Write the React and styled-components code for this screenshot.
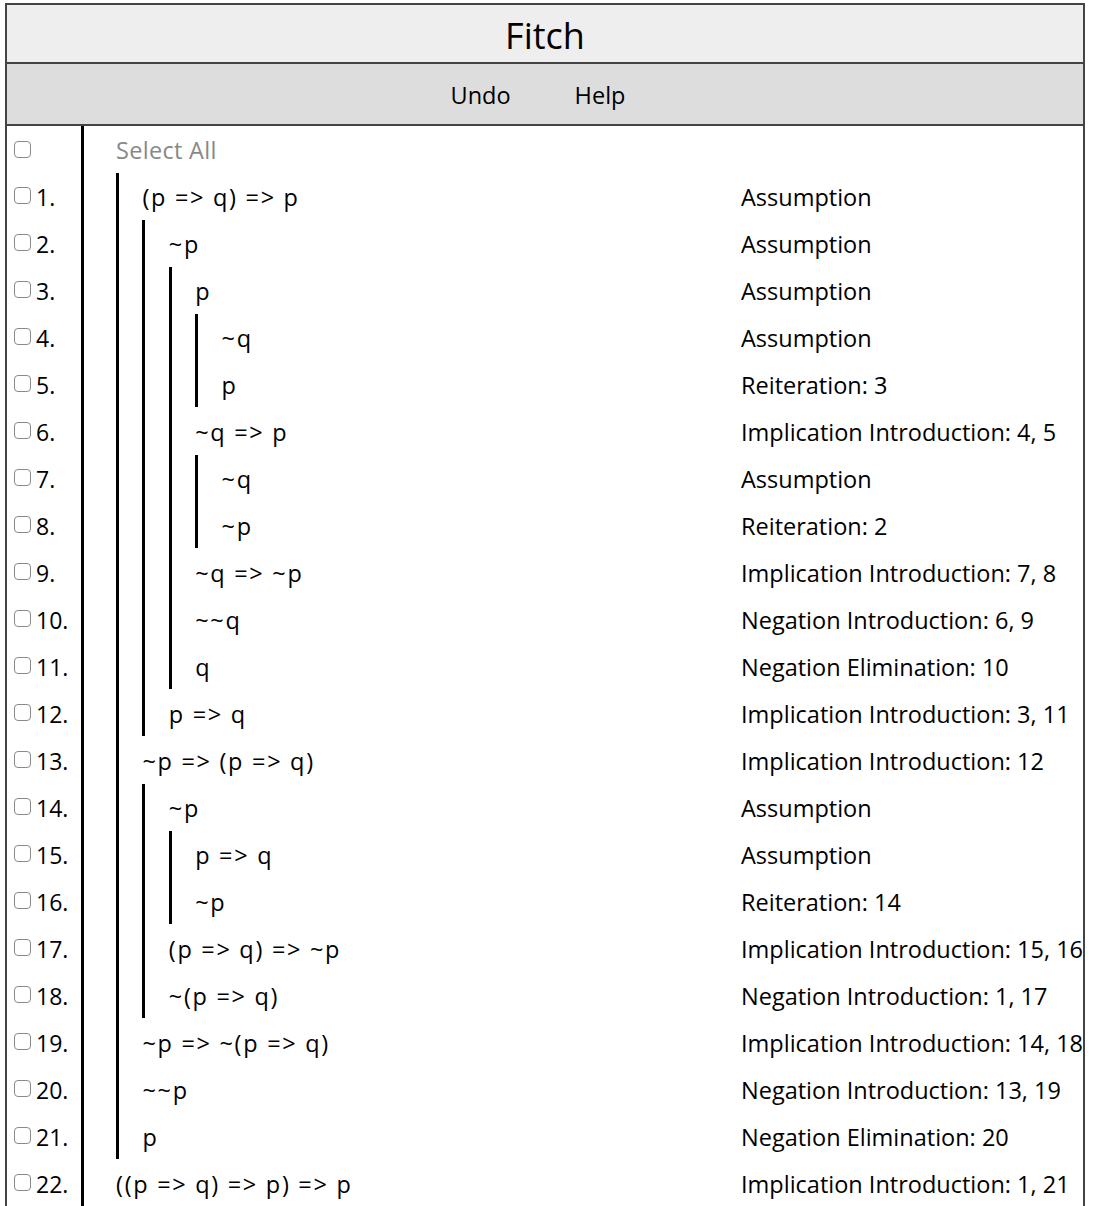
import React from "react";
import styled, { createGlobalStyle } from "styled-components";

const GlobalStyle = createGlobalStyle`
  html, body {
    margin: 0;
    padding: 0;
    background: #fff;
  }
  body {
    font-family: "Open Sans", "Noto Sans CJK KR", sans-serif;
    color: #000;
  }
`;

// depth = number of scope bars, start = opens a new subproof at its innermost level
const lines = [
  { f: "(p => q) => p", j: "Assumption", depth: 1, start: true },
  { f: "~p", j: "Assumption", depth: 2, start: true },
  { f: "p", j: "Assumption", depth: 3, start: true },
  { f: "~q", j: "Assumption", depth: 4, start: true },
  { f: "p", j: "Reiteration: 3", depth: 4 },
  { f: "~q => p", j: "Implication Introduction: 4, 5", depth: 3 },
  { f: "~q", j: "Assumption", depth: 4, start: true },
  { f: "~p", j: "Reiteration: 2", depth: 4 },
  { f: "~q => ~p", j: "Implication Introduction: 7, 8", depth: 3 },
  { f: "~~q", j: "Negation Introduction: 6, 9", depth: 3 },
  { f: "q", j: "Negation Elimination: 10", depth: 3 },
  { f: "p => q", j: "Implication Introduction: 3, 11", depth: 2 },
  { f: "~p => (p => q)", j: "Implication Introduction: 12", depth: 1 },
  { f: "~p", j: "Assumption", depth: 2, start: true },
  { f: "p => q", j: "Assumption", depth: 3, start: true },
  { f: "~p", j: "Reiteration: 14", depth: 3 },
  { f: "(p => q) => ~p", j: "Implication Introduction: 15, 16", depth: 2 },
  { f: "~(p => q)", j: "Negation Introduction: 1, 17", depth: 2 },
  { f: "~p => ~(p => q)", j: "Implication Introduction: 14, 18", depth: 1 },
  { f: "~~p", j: "Negation Introduction: 13, 19", depth: 1 },
  { f: "p", j: "Negation Elimination: 20", depth: 1 },
  { f: "((p => q) => p) => p", j: "Implication Introduction: 1, 21", depth: 0 },
];

const App = () => {
  return (
    <>
      <GlobalStyle />
      <Frame>
        <Title>Fitch</Title>
        <Toolbar>
          <ToolButton>Undo</ToolButton>
          <ToolButton>Help</ToolButton>
        </Toolbar>
        <Proof>
          <Row $height={46}>
            <LeftCell>
              <Check type="checkbox" />
            </LeftCell>
            <FormulaCell>
              <SelectAll>Select All</SelectAll>
            </FormulaCell>
          </Row>
          {lines.map((line, i) => (
            <Row key={i}>
              <LeftCell>
                <Check type="checkbox" />
                <LineNum>{i + 1}.</LineNum>
              </LeftCell>
              <FormulaCell>
                {Array.from({ length: line.depth }).map((_, d) => (
                  <Bar key={d} $start={line.start && d === line.depth - 1} />
                ))}
                <Formula>{line.f}</Formula>
              </FormulaCell>
              <Justification>{line.j}</Justification>
            </Row>
          ))}
        </Proof>
      </Frame>
    </>
  );
};

const Frame = styled.div`
  width: 1076px;
  margin: 3px 0 0 5px;
  border: 2px solid #444;
  border-bottom: none;
`;

const Title = styled.div`
  height: 59px;
  background: #eee;
  border-bottom: 2px solid #444;
  display: flex;
  align-items: center;
  justify-content: center;
  font-size: 36px;
  padding-top: 4px;
  box-sizing: border-box;
`;

const Toolbar = styled.div`
  height: 58px;
  background: #ddd;
  border-bottom: 2px solid #444;
  display: flex;
  align-items: center;
  justify-content: center;
  padding-right: 14px;
  padding-top: 2px;
  box-sizing: content-box;
`;

const ToolButton = styled.div`
  font-size: 23.5px;
  padding: 0 32px;
  cursor: pointer;
`;

const Proof = styled.div`
  display: flex;
  flex-direction: column;
`;

const Row = styled.div`
  display: flex;
  height: ${(p) => p.$height || 47}px;
`;

const LeftCell = styled.div`
  width: 77px;
  flex-shrink: 0;
  border-right: 3px solid #000;
  display: flex;
  align-items: center;
  padding-left: 7px;
  box-sizing: border-box;
`;

const Check = styled.input`
  appearance: none;
  width: 17px;
  height: 17px;
  margin: 0 5px 0 0;
  border: 1px solid #8a8a8a;
  border-radius: 4px;
  background: #fff;
  box-sizing: border-box;
  flex-shrink: 0;
`;

const LineNum = styled.span`
  font-size: 23px;
  padding-top: 3px;
`;

const FormulaCell = styled.div`
  width: 657px;
  flex-shrink: 0;
  display: flex;
  align-items: stretch;
  padding-left: 32px;
  box-sizing: border-box;
`;

const Bar = styled.span`
  width: 3px;
  background: #000;
  margin-right: 23.4px;
  margin-top: ${(p) => (p.$start ? "1px" : "0")};
  flex-shrink: 0;
`;

const Formula = styled.span`
  font-size: 23.5px;
  letter-spacing: 1.7px;
  align-self: center;
  padding-top: 3px;
  white-space: pre;
`;

const SelectAll = styled.span`
  font-size: 23.5px;
  letter-spacing: 0.3px;
  color: #888;
  align-self: center;
  padding-top: 2px;
`;

const Justification = styled.div`
  flex: 1;
  display: flex;
  align-items: center;
  font-size: 23.5px;
  padding-top: 3px;
  white-space: nowrap;
  overflow: hidden;
`;

export default App;
